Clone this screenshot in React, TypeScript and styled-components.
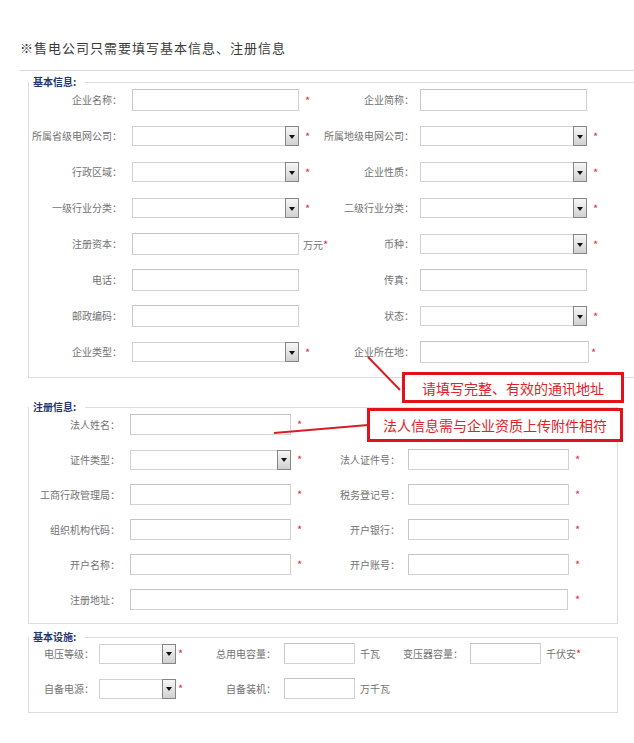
import React from "react";
import styled, { createGlobalStyle } from "styled-components";

const Global = createGlobalStyle`
  html, body { margin: 0; padding: 0; overflow: hidden; background: #fff; }
  body { font-family: "Noto Sans CJK SC", "Noto Sans", sans-serif; color: #666; }
`;

const Page = styled.div`
  position: relative;
  width: 634px;
  height: 743px;
`;

const Header = styled.div`
  margin-left: 20px;
  padding: 39px 0 13px;
  border-bottom: 1px solid #d3dcda;
  font-size: 13px;
  line-height: 18px;
  letter-spacing: 1px;
  color: #3a3a3a;
`;

const Box = styled.fieldset<{ $w: number; $mt: number; $pt: number; $pb: number; $open?: boolean }>`
  box-sizing: border-box;
  width: ${(p) => p.$w}px;
  min-width: 0;
  margin: ${(p) => p.$mt}px 0 0 28px;
  padding: ${(p) => p.$pt}px 0 ${(p) => p.$pb}px 0;
  border: 1px solid #dcdcdc;
  border-right-width: ${(p) => (p.$open ? 0 : 1)}px;
`;

const Legend = styled.legend`
  margin: 0;
  padding: 0 9px 0 4px;
  font-size: 10px;
  line-height: 12px;
  font-weight: bold;
  color: #1f3670;
`;

const Rows = styled.div`
  display: flex;
  flex-direction: column;
  gap: 14px;
`;

const Row = styled.div<{ $h: number }>`
  display: flex;
  align-items: center;
  height: ${(p) => p.$h}px;
`;

const Label = styled.span<{ $w: number; $gap: number }>`
  flex: none;
  box-sizing: border-box;
  width: ${(p) => p.$w}px;
  margin-right: ${(p) => p.$gap}px;
  text-align: right;
  font-size: 10px;
  line-height: 12px;
  white-space: nowrap;
  color: #727272;
`;

const TextInput = styled.input<{ $w: number; $h: number }>`
  flex: none;
  box-sizing: border-box;
  width: ${(p) => p.$w}px;
  height: ${(p) => p.$h}px;
  margin: 0;
  padding: 0;
  border: 1px solid #d2d2d2;
  border-top-color: #c4c4c4;
  border-left-color: #c8c8c8;
  background: #fff;
  outline: none;
`;

const SelectBox = styled.div<{ $w: number }>`
  flex: none;
  box-sizing: border-box;
  width: ${(p) => p.$w}px;
  height: 20px;
  border: 1px solid #d2d2d2;
  background: #fff;
  display: flex;
  justify-content: flex-end;
`;

const Drop = styled.span`
  box-sizing: border-box;
  width: 14px;
  height: 20px;
  margin: -1px -1px 0 0;
  border: 1px solid #858585;
  background: linear-gradient(#f7f7f7, #d0d0d0);
  display: flex;
  align-items: center;
  justify-content: center;
  padding-top: 1px;
`;

const Tri = styled.span`
  width: 0;
  height: 0;
  border-left: 3px solid transparent;
  border-right: 3px solid transparent;
  border-top: 4px solid #111;
`;

const Mark = styled.span<{ $w?: number; $pl: number }>`
  flex: none;
  box-sizing: border-box;
  width: ${(p) => (p.$w ? `${p.$w}px` : "auto")};
  padding-left: ${(p) => p.$pl}px;
  font-size: 10px;
  line-height: 12px;
  white-space: nowrap;
  color: #727272;
`;

const Star = styled.span`
  color: #e0313b;
  font-size: 11px;
`;

const Note = styled.div<{ $x: number; $y: number; $w: number; $h: number }>`
  position: absolute;
  left: ${(p) => p.$x}px;
  top: ${(p) => p.$y}px;
  width: ${(p) => p.$w}px;
  height: ${(p) => p.$h}px;
  box-sizing: border-box;
  border: 3px solid #e1121c;
  background: #fff;
  color: #e0222b;
  font-size: 14px;
  display: flex;
  align-items: center;
  justify-content: center;
  white-space: nowrap;
`;

const Lines = styled.svg`
  position: absolute;
  left: 0;
  top: 0;
  pointer-events: none;
`;

const Select = ({ w }: { w: number }) => (
  <SelectBox $w={w}>
    <Drop>
      <Tri />
    </Drop>
  </SelectBox>
);

const Req = ({ w, pl, unit }: { w?: number; pl: number; unit?: string }) => (
  <Mark $w={w} $pl={pl}>
    {unit}
    <Star>*</Star>
  </Mark>
);

const Empty = ({ w }: { w: number }) => <Mark $w={w} $pl={0} />;

export default function App() {
  return (
    <Page>
      <Global />
      <Header>※售电公司只需要填写基本信息、注册信息</Header>

      <Box $w={606} $mt={5} $pt={1} $pb={14} $open>
        <Legend>基本信息:</Legend>
        <Rows>
          <Row $h={22}>
            <Label $w={93} $gap={10}>企业名称：</Label>
            <TextInput $w={167} $h={22} readOnly />
            <Req w={24} pl={6} />
            <Label $w={91} $gap={6}>企业简称：</Label>
            <TextInput $w={167} $h={22} readOnly />
          </Row>
          <Row $h={22}>
            <Label $w={93} $gap={10}>所属省级电网公司：</Label>
            <Select w={167} />
            <Req w={24} pl={6} />
            <Label $w={91} $gap={6}>所属地级电网公司：</Label>
            <Select w={167} />
            <Req pl={6} />
          </Row>
          <Row $h={22}>
            <Label $w={93} $gap={10}>行政区域：</Label>
            <Select w={167} />
            <Req w={24} pl={6} />
            <Label $w={91} $gap={6}>企业性质：</Label>
            <Select w={167} />
            <Req pl={6} />
          </Row>
          <Row $h={22}>
            <Label $w={93} $gap={10}>一级行业分类：</Label>
            <Select w={167} />
            <Req w={24} pl={6} />
            <Label $w={91} $gap={6}>二级行业分类：</Label>
            <Select w={167} />
            <Req pl={6} />
          </Row>
          <Row $h={22}>
            <Label $w={93} $gap={10}>注册资本：</Label>
            <TextInput $w={167} $h={22} readOnly />
            <Req w={24} pl={4} unit="万元" />
            <Label $w={91} $gap={6}>币种：</Label>
            <Select w={167} />
            <Req pl={6} />
          </Row>
          <Row $h={22}>
            <Label $w={93} $gap={10}>电话：</Label>
            <TextInput $w={167} $h={22} readOnly />
            <Empty w={24} />
            <Label $w={91} $gap={6}>传真：</Label>
            <TextInput $w={167} $h={22} readOnly />
          </Row>
          <Row $h={22}>
            <Label $w={93} $gap={10}>邮政编码：</Label>
            <TextInput $w={167} $h={22} readOnly />
            <Empty w={24} />
            <Label $w={91} $gap={6}>状态：</Label>
            <Select w={167} />
            <Req pl={6} />
          </Row>
          <Row $h={22}>
            <Label $w={93} $gap={10}>企业类型：</Label>
            <Select w={167} />
            <Req w={24} pl={6} />
            <Label $w={91} $gap={6}>企业所在地：</Label>
            <TextInput $w={169} $h={22} readOnly />
            <Req pl={2} />
          </Row>
        </Rows>
      </Box>

      <Box $w={590} $mt={23} $pt={1} $pb={13}>
        <Legend>注册信息:</Legend>
        <Rows>
          <Row $h={21}>
            <Label $w={91} $gap={10}>法人姓名：</Label>
            <TextInput $w={161} $h={21} readOnly />
            <Req w={24} pl={6} />
          </Row>
          <Row $h={21}>
            <Label $w={91} $gap={10}>证件类型：</Label>
            <Select w={161} />
            <Req w={24} pl={6} />
            <Label $w={85} $gap={8}>法人证件号：</Label>
            <TextInput $w={161} $h={21} readOnly />
            <Req pl={6} />
          </Row>
          <Row $h={21}>
            <Label $w={91} $gap={10}>工商行政管理局：</Label>
            <TextInput $w={161} $h={21} readOnly />
            <Req w={24} pl={6} />
            <Label $w={85} $gap={8}>税务登记号：</Label>
            <TextInput $w={161} $h={21} readOnly />
            <Req pl={6} />
          </Row>
          <Row $h={21}>
            <Label $w={91} $gap={10}>组织机构代码：</Label>
            <TextInput $w={161} $h={21} readOnly />
            <Req w={24} pl={6} />
            <Label $w={85} $gap={8}>开户银行：</Label>
            <TextInput $w={161} $h={21} readOnly />
            <Req pl={6} />
          </Row>
          <Row $h={21}>
            <Label $w={91} $gap={10}>开户名称：</Label>
            <TextInput $w={161} $h={21} readOnly />
            <Req w={24} pl={6} />
            <Label $w={85} $gap={8}>开户账号：</Label>
            <TextInput $w={161} $h={21} readOnly />
            <Req pl={6} />
          </Row>
          <Row $h={21}>
            <Label $w={91} $gap={10}>注册地址：</Label>
            <TextInput $w={438} $h={21} readOnly />
            <Req pl={7} />
          </Row>
        </Rows>
      </Box>

      <Box $w={590} $mt={7} $pt={0} $pb={13}>
        <Legend>基本设施:</Legend>
        <Rows>
          <Row $h={21}>
            <Label $w={65} $gap={5}>电压等级：</Label>
            <Select w={77} />
            <Req w={22} pl={2} />
            <Label $w={78} $gap={8}>总用电容量：</Label>
            <TextInput $w={71} $h={21} readOnly />
            <Mark $w={40} $pl={5}>千瓦</Mark>
            <Label $w={68} $gap={7}>变压器容量：</Label>
            <TextInput $w={71} $h={21} readOnly />
            <Req pl={5} unit="千伏安" />
          </Row>
          <Row $h={21}>
            <Label $w={65} $gap={5}>自备电源：</Label>
            <Select w={77} />
            <Req w={22} pl={2} />
            <Label $w={78} $gap={8}>自备装机：</Label>
            <TextInput $w={71} $h={21} readOnly />
            <Mark $w={40} $pl={5}>万千瓦</Mark>
          </Row>
        </Rows>
      </Box>

      <Lines width={634} height={743}>
        <line x1={368} y1={357} x2={400} y2={390} stroke="#d81e25" strokeWidth={2} />
        <line x1={274} y1={433} x2={368} y2={425} stroke="#d81e25" strokeWidth={2} />
      </Lines>
      <Note $x={402} $y={372} $w={222} $h={31}>请填写完整、有效的通讯地址</Note>
      <Note $x={367} $y={408} $w={256} $h={34}>法人信息需与企业资质上传附件相符</Note>
    </Page>
  );
}
